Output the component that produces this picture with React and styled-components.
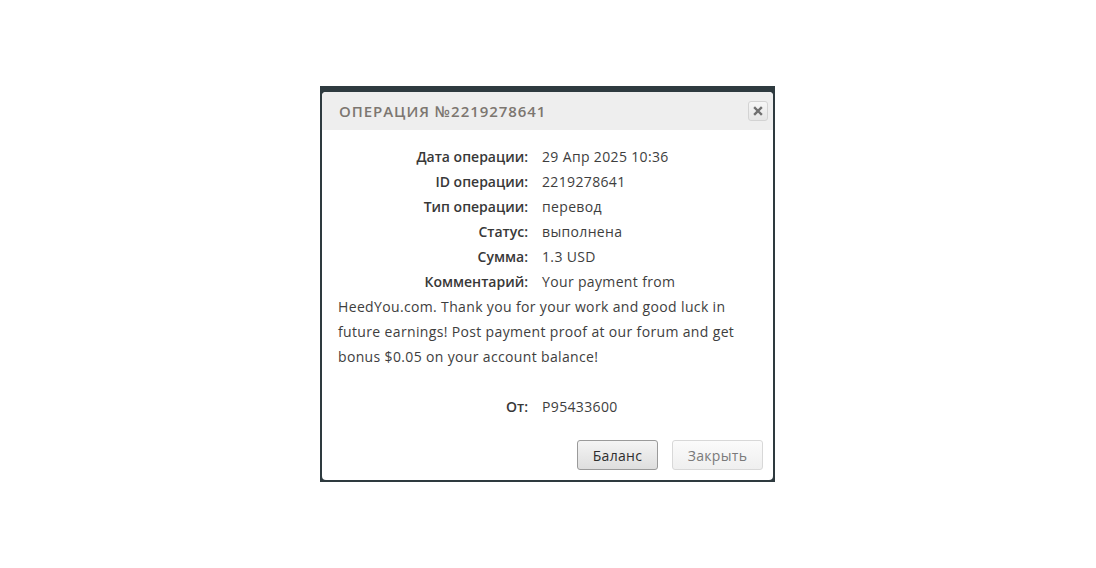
import React from "react";
import styled, { createGlobalStyle } from "styled-components";

const Global = createGlobalStyle`
  html, body { margin: 0; padding: 0; background: #ffffff; }
  body { font-family: "Open Sans", "Liberation Sans", sans-serif; }
`;

const Page = styled.div`
  width: 100vw;
  height: 100vh;
  box-sizing: border-box;
  padding-right: 1px;
  display: flex;
  align-items: center;
  justify-content: center;
`;

const Frame = styled.div`
  width: 455px;
  height: 396px;
  box-sizing: border-box;
  background: #2e3a3f;
  padding: 6px 2px 2px 2px;
  display: flex;
`;

const Dialog = styled.div`
  flex: 1;
  background: #ffffff;
  border-radius: 4px;
  overflow: hidden;
  display: flex;
  flex-direction: column;
`;

const Header = styled.div`
  height: 38px;
  background: #eeeeee;
  display: flex;
  align-items: center;
  justify-content: space-between;
  padding: 0 5px 0 17px;
`;

const Title = styled.div`
  font-size: 15px;
  font-weight: 600;
  letter-spacing: 0.95px;
  color: #7c7670;
  text-transform: uppercase;
`;

const CloseButton = styled.button`
  width: 20px;
  height: 20px;
  box-sizing: border-box;
  border: 1px solid #d3d3d3;
  border-radius: 3px;
  background: linear-gradient(#f6f6f6, #e6e6e6);
  padding: 0;
  display: flex;
  align-items: center;
  justify-content: center;
  color: #6f6f6f;
  cursor: pointer;
`;

const Body = styled.div`
  flex: 1;
  padding: 14px 16px 0 16px;
  font-size: 14px;
  line-height: 25px;
  color: #3a3a3a;
`;

const Row = styled.div``;

const Label = styled.span`
  display: inline-block;
  width: 190px;
  text-align: right;
  margin-right: 14px;
  font-weight: 600;
  color: #383838;
`;

const Value = styled.span`
  color: #3e3e3e;
  letter-spacing: 0.35px;
`;

const Spacer = styled.div`
  height: 25px;
`;

const Footer = styled.div`
  display: flex;
  justify-content: flex-end;
  gap: 14px;
  padding: 0 10px 10px 0;
`;

const Button = styled.button`
  height: 30px;
  width: ${(p) => p.$w}px;
  box-sizing: border-box;
  border-radius: 3px;
  font-family: "Open Sans", "Liberation Sans", sans-serif;
  font-size: 14px;
  font-weight: 400;
  letter-spacing: 0.3px;
  padding: 0;
  cursor: pointer;
  border: 1px solid ${(p) => (p.$primary ? "#9a9a9a" : "#d8d8d8")};
  color: ${(p) => (p.$primary ? "#2e2e2e" : "#7a7a7a")};
  background: ${(p) =>
    p.$primary
      ? "linear-gradient(#f4f4f4, #dedede)"
      : "linear-gradient(#fbfbfb, #efefef)"};
`;

const rows = [
  ["Дата операции:", "29 Апр 2025 10:36"],
  ["ID операции:", "2219278641"],
  ["Тип операции:", "перевод"],
  ["Статус:", "выполнена"],
  ["Сумма:", "1.3 USD"],
  [
    "Комментарий:",
    "Your payment from HeedYou.com. Thank you for your work and good luck in future earnings! Post payment proof at our forum and get bonus $0.05 on your account balance!",
  ],
];

export default function App() {
  return (
    <>
      <Global />
      <Page>
        <Frame>
          <Dialog>
            <Header>
              <Title>Операция №2219278641</Title>
              <CloseButton aria-label="close">
                <svg width="10" height="10" viewBox="0 0 10 10">
                  <path d="M2 2 L8 8 M8 2 L2 8" stroke="currentColor" strokeWidth="2.4" strokeLinecap="square" />
                </svg>
              </CloseButton>
            </Header>
            <Body>
              {rows.map(([l, v]) => (
                <Row key={l}>
                  <Label>{l}</Label>
                  <Value>{v}</Value>
                </Row>
              ))}
              <Spacer />
              <Row>
                <Label>От:</Label>
                <Value>P95433600</Value>
              </Row>
            </Body>
            <Footer>
              <Button $primary $w={81}>Баланс</Button>
              <Button $w={91}>Закрыть</Button>
            </Footer>
          </Dialog>
        </Frame>
      </Page>
    </>
  );
}
